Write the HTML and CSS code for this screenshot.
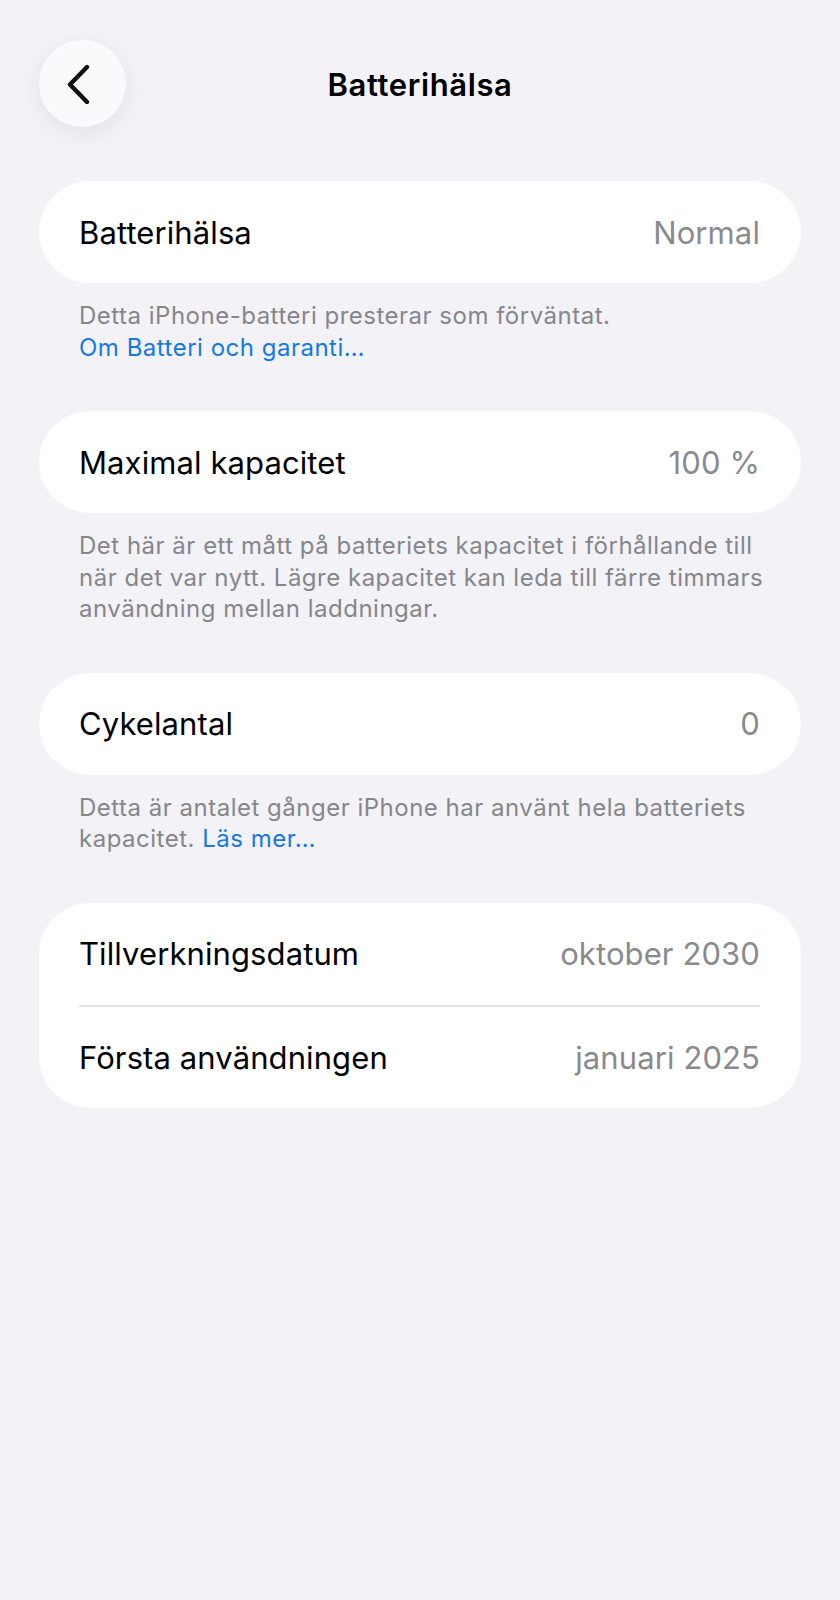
FILE: index.html
```html
<!DOCTYPE html>
<html lang="sv">
<head>
<meta charset="utf-8">
<title>Batterihälsa</title>
<link rel="stylesheet" href="styles.css">
</head>
<body>
<div class="screen">
  <header class="nav">
    <button class="back" aria-label="Tillbaka">
      <svg width="24" height="40" viewBox="0 0 24 40"><path d="M20 3 L3 20.5 L20 38" fill="none" stroke="#111" stroke-width="4.4" stroke-linecap="round" stroke-linejoin="round"/></svg>
    </button>
    <h1 class="title">Batterihälsa</h1>
    <span class="spacer"></span>
  </header>

  <section class="group">
    <div class="card">
      <div class="row"><span class="label">Batterihälsa</span><span class="value">Normal</span></div>
    </div>
    <p class="footer">Detta iPhone-batteri presterar som förväntat.<br><a class="link">Om Batteri och garanti…</a></p>
  </section>

  <section class="group">
    <div class="card">
      <div class="row"><span class="label">Maximal kapacitet</span><span class="value">100 %</span></div>
    </div>
    <p class="footer">Det här är ett mått på batteriets kapacitet i förhållande till när det var nytt. Lägre kapacitet kan leda till färre timmars användning mellan laddningar.</p>
  </section>

  <section class="group">
    <div class="card">
      <div class="row"><span class="label">Cykelantal</span><span class="value">0</span></div>
    </div>
    <p class="footer">Detta är antalet gånger iPhone har använt hela batteriets kapacitet. <a class="link">Läs mer…</a></p>
  </section>

  <section class="group">
    <div class="card">
      <div class="row"><span class="label">Tillverkningsdatum</span><span class="value">oktober 2030</span></div>
      <div class="row"><span class="label">Första användningen</span><span class="value">januari 2025</span></div>
    </div>
  </section>
</div>
</body>
</html>
```

FILE: styles.css
```css
* { box-sizing: border-box; }

html, body {
  margin: 0;
  padding: 0;
  background: #f2f2f7;
}

body {
  font-family: Inter, "Noto Sans", "Liberation Sans", sans-serif;
  color: #000;
  -webkit-font-smoothing: antialiased;
}

.screen {
  width: 840px;
  min-height: 1600px;
  padding: 40px 39px 0 39px;
}

.nav {
  display: grid;
  grid-template-columns: 87px 1fr 87px;
  align-items: center;
  height: 87px;
  margin-bottom: 54px;
}

.back {
  width: 87px;
  height: 87px;
  border-radius: 50%;
  border: none;
  background: #fafafc;
  box-shadow: 0 6px 26px rgba(0, 0, 0, 0.07);
  display: flex;
  align-items: center;
  justify-content: center;
  padding: 0;
}

.back svg {
  margin-left: -7px;
}

.title {
  margin: 0;
  text-align: center;
  font-size: 31px;
  font-weight: 600;
  letter-spacing: 0.6px;
  line-height: 1;
  padding-top: 1px;
}

.group {
  margin-bottom: 48px;
}

.card {
  background: #fff;
  border-radius: 51px;
  padding: 0 41px 0 40px;
}

.row {
  display: flex;
  justify-content: space-between;
  align-items: center;
  height: 102px;
  font-size: 31px;
  letter-spacing: 0.1px;
}

.row + .row {
  border-top: 2px solid #e3e3e7;
  height: 103px;
}

.label {
  color: #000;
}

.value {
  color: #8a8a8e;
}

.footer {
  margin: 0;
  padding: 17px 20px 0 40px;
  font-size: 24px;
  line-height: 31.5px;
  color: #86868b;
  letter-spacing: 0.5px;
}

.link {
  color: #1479e6;
}
```
